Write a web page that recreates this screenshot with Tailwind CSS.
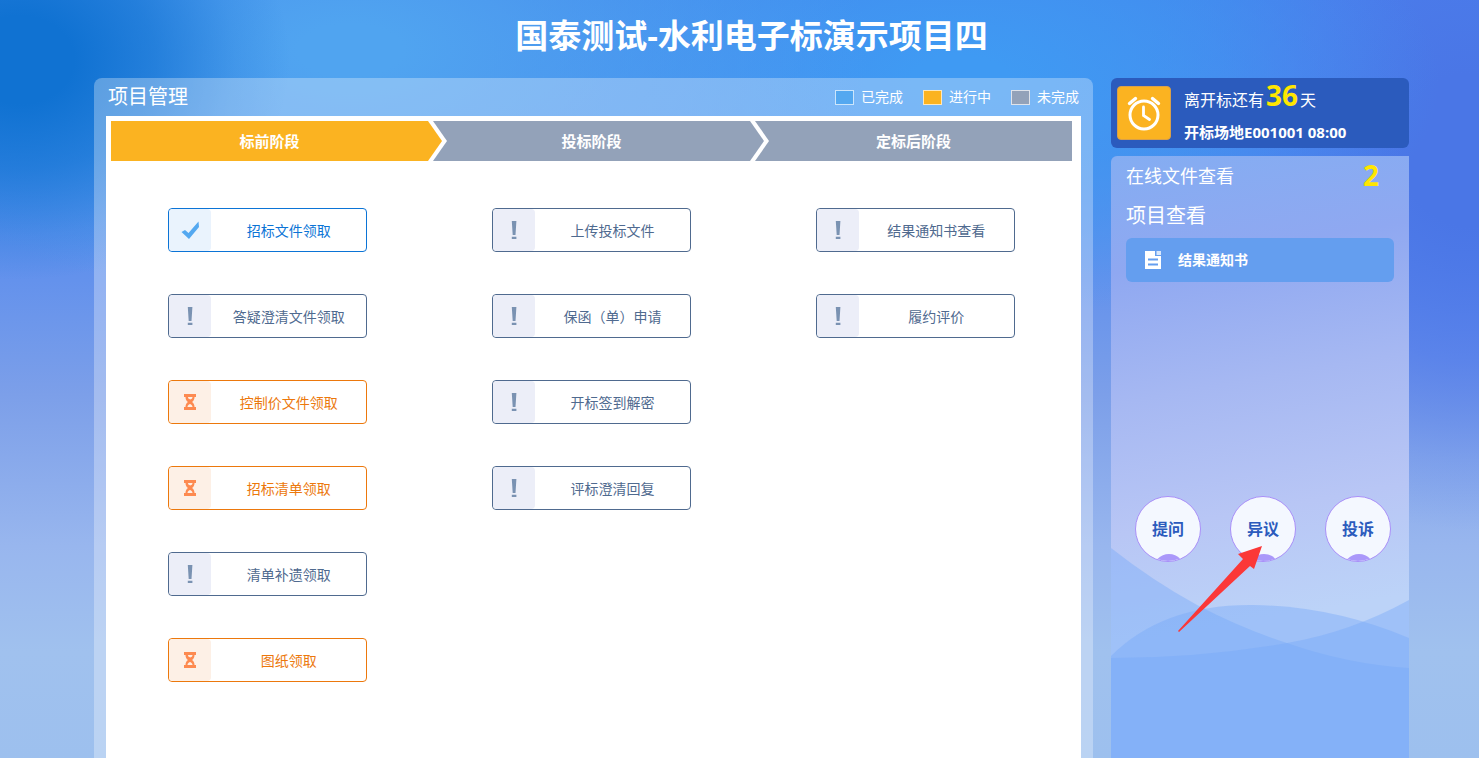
<!DOCTYPE html>
<html lang="zh-CN">
<head>
  <meta charset="UTF-8" />
  <meta name="viewport" content="width=device-width, initial-scale=1.0"/>
  <title>国泰测试-水利电子标演示项目四</title>
  <script src="https://cdn.jsdelivr.net/npm/@tailwindcss/browser@4"></script>
</head>
<body class="min-h-screen flex flex-col pl-[94px] pr-[70px] overflow-x-hidden text-sm text-white font-['Open_Sans','Noto_Sans_CJK_SC',sans-serif] bg-[radial-gradient(ellipse_270px_220px_at_20px_60px,#1072d2_20%,#1072d2aa_50%,#1072d233_80%,#1072d200),radial-gradient(ellipse_520px_260px_at_350px_50px,#50a4f0_10%,#50a4f000),radial-gradient(ellipse_480px_240px_at_960px_80px,#3f9af3_10%,#3f9af300),radial-gradient(ellipse_340px_380px_at_1470px_150px,#4a76e6_20%,#4e78eaaa_55%,#4e78ea33_82%,#4e78ea00),linear-gradient(#4484ec,#4a8aec_20%,#6492ec_37%,#7c9fe9_52%,#98b6ee_72%,#a0c1ee_86%,#9dc0ee)]">

  <h1 class="pt-3 text-center text-[33px] leading-[48px] font-bold">国泰测试-水利电子标演示项目四</h1>

  <div class="flex-1 flex gap-[18px] pt-[18px]">

    <main class="flex-1 flex flex-col px-3 rounded-t-lg bg-white/30">
      <div class="flex items-center justify-between h-[38px] px-[2px]">
        <h2 class="text-xl">项目管理</h2>
        <ul class="flex gap-5">
          <li class="flex items-center gap-[7px]"><span class="w-[19px] h-[15px] border border-white/70 bg-[#54a8f0]"></span>已完成</li>
          <li class="flex items-center gap-[7px]"><span class="w-[19px] h-[15px] border border-white/70 bg-[#fbb321]"></span>进行中</li>
          <li class="flex items-center gap-[7px]"><span class="w-[19px] h-[15px] border border-white/70 bg-[#93a2b9]"></span>未完成</li>
        </ul>
      </div>

      <div class="flex-1 bg-white pt-[5px]">
        <!-- stages -->
        <ol class="grid grid-cols-3 gap-[5px] ml-[5px] mr-[9px] bg-[#93a2b9] text-center text-[15px] leading-10 font-bold">
          <li class="relative bg-[#fbb321]">标前阶段
            <svg class="absolute left-full top-0 w-5 h-10" viewBox="0 0 20 40"><path d="M0 0h5l14 20L5 40H0z" fill="#fff"/><path d="M0 0l14 20L0 40z" fill="#fbb321"/></svg>
          </li>
          <li class="relative">投标阶段
            <svg class="absolute left-full top-0 w-5 h-10" viewBox="0 0 20 40"><path d="M0 0h5l14 20L5 40H0z" fill="#fff"/><path d="M0 0l14 20L0 40z" fill="#93a2b9"/></svg>
          </li>
          <li>定标后阶段</li>
        </ol>

        <div id="stages" class="grid grid-cols-3 justify-items-center pt-[47px] pr-1 pb-[42px]"></div>
      </div>
    </main>

    <aside class="w-[298px] flex flex-col gap-2">
      <section class="flex items-center gap-[13px] h-[70px] px-[6px] rounded-md bg-[#2b5bbd]">
        <span class="w-[54px] h-[54px] rounded border border-[#d9a04a] bg-[#fbb321]">
          <svg viewBox="0 0 52 52" fill="none" stroke="#fff" stroke-width="3" stroke-linecap="round">
            <circle cx="26" cy="28" r="14"/>
            <path d="M25.500 20v8.500l6 4" stroke-width="2.800"/>
            <path d="M11.500 16.500l6-5M40.500 16.500l-6-5" stroke-width="3.400"/>
          </svg>
        </span>
        <div>
          <p class="text-base leading-8">离开标还有<b class="px-[2px] text-[28px] text-[#ffe600]">36</b>天</p>
          <p class="text-[15px] leading-8 font-bold">开标场地E001001 08:00</p>
        </div>
      </section>

      <section class="relative flex-1 flex flex-col px-[15px] rounded-tl-md bg-[linear-gradient(170deg,#84adf2,#8fa8f1_18%,#a6b8f2_38%,#b8c6f5_58%,#bcd3f8_75%)]">
        <svg class="absolute inset-x-0 bottom-0 w-full h-[212px]" viewBox="0 0 298 212" preserveAspectRatio="none" fill="#76a9f9" fill-opacity=".42">
          <path d="M0 2Q42 35 86 59Q132 83 176 97Q236 118 298 122V212H0z"/>
          <path d="M0 110Q52 58 142 59Q222 60 298 92V212H0z"/>
          <path d="M0 112Q90 112 176 97Q240 86 298 54V212H0z"/>
        </svg>
        <h2 class="flex items-center justify-between h-10 pr-[15px] text-lg">在线文件查看<b class="text-[28px] text-[#ffe600]">2</b></h2>
        <h2 class="h-[42px] leading-10 text-xl">项目查看</h2>
        <a href="#" class="flex items-center gap-4 h-11 pl-[18px] rounded-md bg-[#649eef] font-bold">
          <svg class="w-[18px] h-[18px]" viewBox="0 0 18 18"><path d="M1 0h10v5h6v13H1z" fill="#fff"/><path d="M12.500 0H17v4h-4.500z" fill="#fff" fill-opacity=".75"/><path d="M4 8.500h10M4 13.500h10" stroke="#649eef" stroke-width="1.800"/></svg>
          结果通知书
        </a>
        <div class="relative flex justify-between mt-[214px] pl-[9px] pr-[3px] text-base font-bold text-[#2b5bbd]">
          <button class="relative w-[66px] h-[66px] rounded-full overflow-hidden border border-[#a98ff8] bg-[#f4f8ff]">提问<span class="absolute left-[17px] bottom-[-25px] w-8 h-8 rounded-full bg-[#aa98fa]"></span></button>
          <div class="relative">
            <button class="relative w-[66px] h-[66px] rounded-full overflow-hidden border border-[#a98ff8] bg-[#f4f8ff]">异议<span class="absolute left-[17px] bottom-[-25px] w-8 h-8 rounded-full bg-[#aa98fa]"></span></button>
            <svg class="absolute left-[-52px] top-[50px] w-[84px] h-[86px]" viewBox="0 0 84 86"><path d="M0 85L65 13L60 8L84 0L76 23L72 20L1 86z" fill="#fb3838"/></svg>
          </div>
          <button class="relative w-[66px] h-[66px] rounded-full overflow-hidden border border-[#a98ff8] bg-[#f4f8ff]">投诉<span class="absolute left-[17px] bottom-[-25px] w-8 h-8 rounded-full bg-[#aa98fa]"></span></button>
        </div>
      </section>
    </aside>
  </div>

  <script>
    const states = {
      done: {
        box: 'border-[#0b74d6] text-[#0b74d6]',
        tile: 'bg-[#eaf3fd]',
        icon: '<path d="M.5 11L4 9l3.500 3L17.500.5 18 6 8 18z" fill="#54a8f0"/>'
      },
      doing: {
        box: 'border-[#ec780c] text-[#ec780c]',
        tile: 'bg-[#fdf0e6]',
        icon: '<path d="M3 1h12v3h-1.500c0 2.500-1 4-2.500 5c1.500 1 2.500 2.500 2.500 5H15v3H3v-3h1.500c0-2.500 1-4 2.500-5C5.500 8 4.500 6.500 4.500 4H3z" fill="#fd8a50"/><path d="M7 4h4.500c0 1.500-1 2-2.200 2.500C8 6 7 5.500 7 4zM9 11c1.500.5 2.500 1.500 2.500 3h-5c0-1.500 1-2.500 2.500-3z" fill="#fdf0e6"/>'
      },
      todo: {
        box: 'border-[#4f6a8f] text-[#4f6a8f]',
        tile: 'bg-[#eceef8]',
        icon: '<path d="M6.800 0h4.600l-.9 14H7.700zM6.800 15.800h4.600V18H6.800z" fill="#7a92b2"/>'
      }
    };

    const stages = [
      [['招标文件领取', 'done'], ['答疑澄清文件领取', 'todo'], ['控制价文件领取', 'doing'], ['招标清单领取', 'doing'], ['清单补遗领取', 'todo'], ['图纸领取', 'doing']],
      [['上传投标文件', 'todo'], ['保函（单）申请', 'todo'], ['开标签到解密', 'todo'], ['评标澄清回复', 'todo']],
      [['结果通知书查看', 'todo'], ['履约评价', 'todo']]
    ];

    document.getElementById('stages').innerHTML = stages.map(items => `
      <div class="flex flex-col gap-[42px]">
        ${items.map(([label, state]) => `
          <button class="flex w-[199px] h-11 rounded border bg-white ${states[state].box}">
            <span class="flex items-center justify-center w-[42px] h-[42px] rounded ${states[state].tile}">
              <svg class="w-[18px] h-[18px]" viewBox="0 0 18 18">${states[state].icon}</svg>
            </span>
            <span class="flex-1 leading-[44px]">${label}</span>
          </button>`).join('')}
      </div>`).join('');
  </script>
</body>
</html>
